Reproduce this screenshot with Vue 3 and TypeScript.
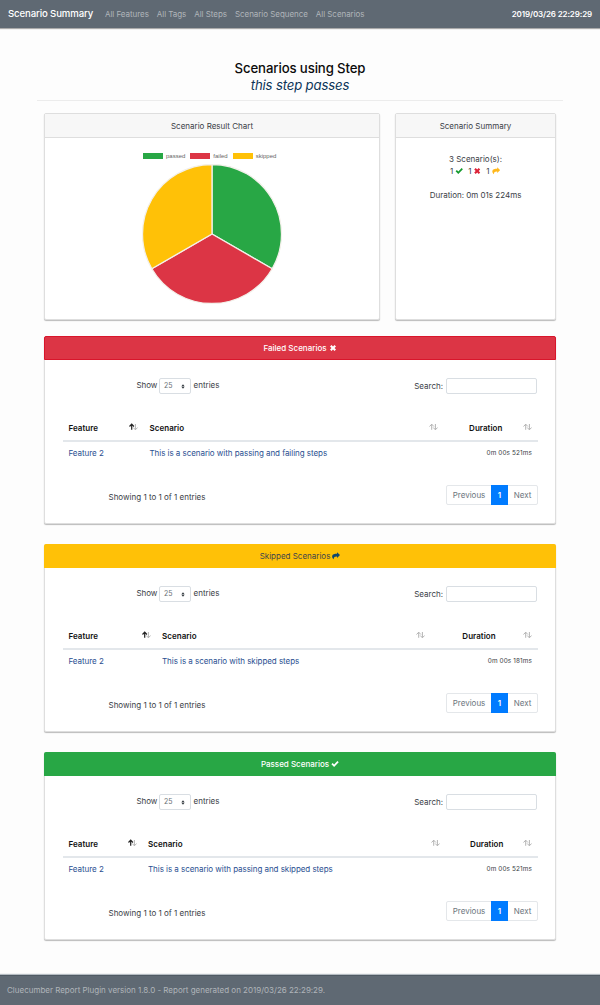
<script setup lang="ts">
type Status = 'failed' | 'skipped' | 'passed'

interface Section {
  status: Status
  title: string
  scenario: string
  duration: string
}

const links: string[] = ['All Features', 'All Tags', 'All Steps', 'Scenario Sequence', 'All Scenarios']

const legend: Status[] = ['passed', 'failed', 'skipped']

const sections: Section[] = [
  {
    status: 'failed',
    title: 'Failed Scenarios',
    scenario: 'This is a scenario with passing and failing steps',
    duration: '0m 00s 521ms',
  },
  {
    status: 'skipped',
    title: 'Skipped Scenarios',
    scenario: 'This is a scenario with skipped steps',
    duration: '0m 00s 181ms',
  },
  {
    status: 'passed',
    title: 'Passed Scenarios',
    scenario: 'This is a scenario with passing and skipped steps',
    duration: '0m 00s 521ms',
  },
]

const iconPaths: Record<Status, string> = {
  passed: 'M0.8 8.6 3.4 6 6.2 8.8 12.9 2.1 15.4 4.7 6.2 13.9Z',
  failed: 'M2 5 5 2 8 5 11 2 14 5 11 8 14 11 11 14 8 11 5 14 2 11 5 8Z',
  skipped: 'M10 0.6 16 6.2 10 11.8V8.9C5.6 8.7 3.6 9.8 3.4 14.4 0.8 12.2 0 10 0.3 7.8 1 4.2 5 3.5 10 3.5Z',
}
</script>

<template>
  <div class="page">
    <nav class="navbar">
      <span class="brand">Scenario Summary</span>
      <a v-for="link in links" :key="link" class="nav-link">{{ link }}</a>
      <span class="date">2019/03/26 22:29:29</span>
    </nav>

    <main class="content">
      <header class="heading">
        <h1>Scenarios using Step</h1>
        <h2>this step passes</h2>
      </header>

      <div class="overview">
        <section class="card chart-card">
          <div class="card-header">Scenario Result Chart</div>
          <div class="legend">
            <span v-for="name in legend" :key="name" class="legend-item">
              <i class="swatch" :class="name"></i>
              <span class="legend-text">{{ name }}</span>
            </span>
          </div>
          <svg class="pie" viewBox="-70 -70 140 140">
            <g stroke="#f3f0ea" stroke-width="1.3" stroke-linejoin="round">
              <path fill="#28a745" d="M0 0V-69.5A69.5 69.5 0 0 1 60.19 34.75Z" />
              <path fill="#dc3545" d="M0 0 60.19 34.75A69.5 69.5 0 0 1 -60.19 34.75Z" />
              <path fill="#ffc107" d="M0 0 -60.19 34.75A69.5 69.5 0 0 1 0 -69.5Z" />
            </g>
          </svg>
        </section>

        <section class="card summary-card">
          <div class="card-header">Scenario Summary</div>
          <div class="summary">
            <div>3 Scenario(s):</div>
            <div class="counts">
              <span v-for="name in legend" :key="name" class="count">
                1<svg class="icon" :class="'tint-' + name" viewBox="0 0 16 16"><path :d="iconPaths[name]" /></svg>
              </span>
            </div>
            <div class="total">Duration: 0m 01s 224ms</div>
          </div>
        </section>
      </div>

      <section v-for="s in sections" :key="s.status" class="card result" :class="'result-' + s.status">
        <div class="card-header" :class="s.status">
          {{ s.title }}<svg class="icon" viewBox="0 0 16 16"><path :d="iconPaths[s.status]" /></svg>
        </div>
        <div class="controls">
          <label class="length">
            <span>Show</span>
            <span class="select">25
              <svg viewBox="0 0 4 6"><path d="M2 0.3 3.9 2.6H0.1ZM2 5.7 0.1 3.4H3.9Z" /></svg>
            </span>
            <span>entries</span>
          </label>
          <label class="search"><span>Search:</span><input type="text" /></label>
        </div>

        <table>
          <colgroup><col class="c-feature" /><col /><col class="c-duration" /></colgroup>
          <thead>
            <tr>
              <th v-for="(col, i) in ['Feature', 'Scenario', 'Duration']" :key="col">
                <div class="th" :class="{ centered: i === 2 }">
                  <span>{{ col }}</span>
                  <svg class="sort" viewBox="0 0 9 8">
                    <path d="M6.4 1V6.8M4.2 4.5 6.4 6.8 8.6 4.5" />
                    <path :class="{ active: i === 0 }" d="M2.7 6.8V1M0.5 3.5 2.7 1.2 4.9 3.5" />
                  </svg>
                </div>
              </th>
            </tr>
          </thead>
          <tbody>
            <tr>
              <td><a>Feature 2</a></td>
              <td><a>{{ s.scenario }}</a></td>
              <td class="time">{{ s.duration }}</td>
            </tr>
          </tbody>
        </table>

        <div class="bottom">
          <span class="info">Showing 1 to 1 of 1 entries</span>
          <div class="pagination">
            <span class="prev">Previous</span><span class="current">1</span><span class="next">Next</span>
          </div>
        </div>
      </section>
    </main>

    <footer class="footer">Cluecumber Report Plugin version 1.8.0 - Report generated on 2019/03/26 22:29:29.</footer>
  </div>
</template>

<style>
body {
  margin: 0;
  background: #fdfdfd;
}
</style>

<style scoped>
.page {
  box-sizing: border-box;
  width: 600px;
  height: 1005px;
  display: flex;
  flex-direction: column;
  overflow: hidden;
  background: #fdfdfd;
  color: #3a4046;
  font-family: Inter, "Liberation Sans", sans-serif;
  font-size: 8px;
  line-height: 12px;
}
.page * {
  box-sizing: border-box;
}
.navbar {
  height: 28px;
  flex: none;
  display: flex;
  align-items: center;
  padding: 0 8px;
  background: #5f6973;
  box-shadow: 0 1px 1px #aaa;
  color: #b0b5ba;
  white-space: nowrap;
}
.brand {
  width: 97px;
  color: #fff;
  font-size: 9.6px;
  font-weight: 500;
  letter-spacing: -0.12px;
}
.nav-link {
  margin-right: 8px;
  letter-spacing: -0.05px;
}
.date {
  margin-left: auto;
  color: #fff;
  font-weight: 600;
  letter-spacing: -0.12px;
}
.content {
  flex: 1;
  padding: 32px 37px 0;
}
.heading {
  height: 41px;
  border-bottom: 1px solid #ececec;
  text-align: center;
}
h1,
h2 {
  margin: 0;
  font-size: 13.2px;
  font-weight: 500;
  line-height: 16.5px;
  letter-spacing: -0.12px;
  color: #0b0b0b;
}
h2 {
  font-style: italic;
  font-weight: 400;
  line-height: 16px;
  letter-spacing: -0.17px;
  color: #0e3659;
}
.overview {
  display: flex;
  gap: 15px;
  height: 207px;
  margin: 12px 7px 0;
}
.card {
  background: #fff;
  border: 1px solid #dedede;
  border-radius: 2px;
  box-shadow: 0 1px 1px #bbb;
}
.chart-card {
  width: 336px;
}
.summary-card {
  width: 161px;
}
.card-header {
  height: 24px;
  display: flex;
  align-items: center;
  justify-content: center;
  border-bottom: 1px solid #dedede;
  background: #f7f7f7;
}
.legend {
  display: flex;
  gap: 5px;
  height: 8px;
  margin: 13.5px 0 0 98px;
  align-items: center;
  color: #666;
  font-family: "Liberation Sans", Arial, sans-serif;
  font-size: 6px;
  line-height: 8px;
}
.legend-item {
  display: flex;
  align-items: center;
  gap: 3px;
}
.swatch {
  width: 20px;
  height: 6px;
}
.passed {
  background: #28a745;
}
.failed {
  background: #dc3545;
}
.skipped {
  background: #ffc107;
}
.pie {
  display: block;
  width: 140px;
  height: 140px;
  margin: 4.5px 0 0 97px;
}
.summary {
  padding-top: 15px;
  text-align: center;
}
.counts {
  display: flex;
  justify-content: center;
  gap: 4.5px;
  padding-right: 1px;
}
.count {
  display: flex;
  align-items: center;
}
.icon {
  width: 8px;
  height: 8px;
  margin-left: 2px;
  fill: currentColor;
}
.counts .icon {
  width: 8.4px;
}
.tint-passed {
  color: #159a2e;
}
.tint-failed {
  color: #dc2338;
}
.tint-skipped {
  color: #ffb81c;
}
.total {
  margin-top: 12px;
}
.result {
  height: 188px;
  margin: 16px 7px 0;
}
.result + .result {
  margin-top: 20px;
}
.result .card-header {
  height: 24px;
  margin: -1px -1px 1px;
  border: 1px solid transparent;
  border-radius: 2px 2px 0 0;
  color: #fff;
  font-weight: 500;
}
.result .card-header.failed {
  border-color: #d9152b;
}
.result .card-header.skipped {
  color: #3f454b;
  font-weight: 400;
}
.result .skipped .icon {
  color: #12466e;
}
.controls {
  display: flex;
  justify-content: space-between;
  padding: 17px 18px 0 91.5px;
}
.length,
.search {
  display: flex;
  align-items: center;
  height: 16px;
}
.length {
  gap: 2.5px;
  line-height: 12px;
}
.length > span {
  margin-top: -2px;
}
.length > span:first-child {
  width: 20px;
  letter-spacing: -0.08px;
}
.length > .select {
  margin-top: 0;
}
.select {
  flex: none;
  display: flex;
  align-items: center;
  justify-content: space-between;
  width: 32px;
  height: 16px;
  padding: 0 4px;
  border: 1px solid #d9dee3;
  border-radius: 2px;
  background: #fff;
  color: #6b7075;
  font-size: 7px;
}
.select svg {
  width: 4px;
  height: 5px;
  margin-right: 1.5px;
  fill: #343a40;
}
.search {
  gap: 3px;
}
.search input {
  width: 91px;
  height: 16px;
  margin: 0;
  padding: 0 4px;
  border: 1px solid #d9dee3;
  border-radius: 2px;
  background: #fff;
  font: inherit;
}
table {
  width: 475px;
  margin: 22px 0 0 18px;
  table-layout: fixed;
  border-collapse: separate;
  border-spacing: 0;
}
.c-feature {
  width: 81px;
}
.c-duration {
  width: 94px;
}
.result-skipped .c-feature {
  width: 93.5px;
}
.result-skipped .c-duration {
  width: 107.5px;
}
.result-passed .c-feature {
  width: 79.5px;
}
.result-passed .c-duration {
  width: 92px;
}
th {
  height: 26px;
  padding: 0 6px 0 5.5px;
  border-bottom: 2px solid #e3e7eb;
  color: #111;
  font-weight: 600;
  letter-spacing: 0.04px;
  text-align: left;
}
.th {
  display: flex;
  align-items: center;
  justify-content: space-between;
}
.centered span {
  flex: 1;
  padding-right: 1px;
  text-align: center;
}
.sort {
  width: 9px;
  height: 8px;
  margin-top: -2px;
  fill: none;
  stroke: #b4b4b4;
  stroke-width: 1;
}
.sort .active {
  stroke: #222;
  stroke-width: 1.2;
}
td {
  height: 23px;
  padding: 0 6px 2px 5.5px;
}
td a {
  color: #2a4f91;
  letter-spacing: -0.05px;
}
.time {
  padding-bottom: 1px;
  font-size: 6.4px;
  letter-spacing: 0.12px;
  text-align: right;
}
.bottom {
  display: flex;
  justify-content: space-between;
  margin-top: 20px;
  padding: 0 17px 0 63.5px;
}
.info {
  padding-top: 6px;
}
.pagination {
  display: flex;
  width: 92px;
  height: 20px;
  border: 1px solid #e4e7ea;
  border-radius: 2px;
  color: #6c757d;
  line-height: 18px;
  text-align: center;
}
.prev {
  width: 44px;
}
.current {
  width: 17px;
  margin: -1px 0;
  background: #007bff;
  color: #fff;
  font-weight: 600;
  line-height: 20px;
}
.next {
  flex: 1;
}
.footer {
  flex: none;
  height: 30px;
  padding-left: 7px;
  border-top: 1px solid #4f5a64;
  background: #5f6973;
  box-shadow: 0 -1px 1px #b5bcc2;
  color: #b0b5ba;
  line-height: 29px;
  letter-spacing: -0.01px;
}
</style>
